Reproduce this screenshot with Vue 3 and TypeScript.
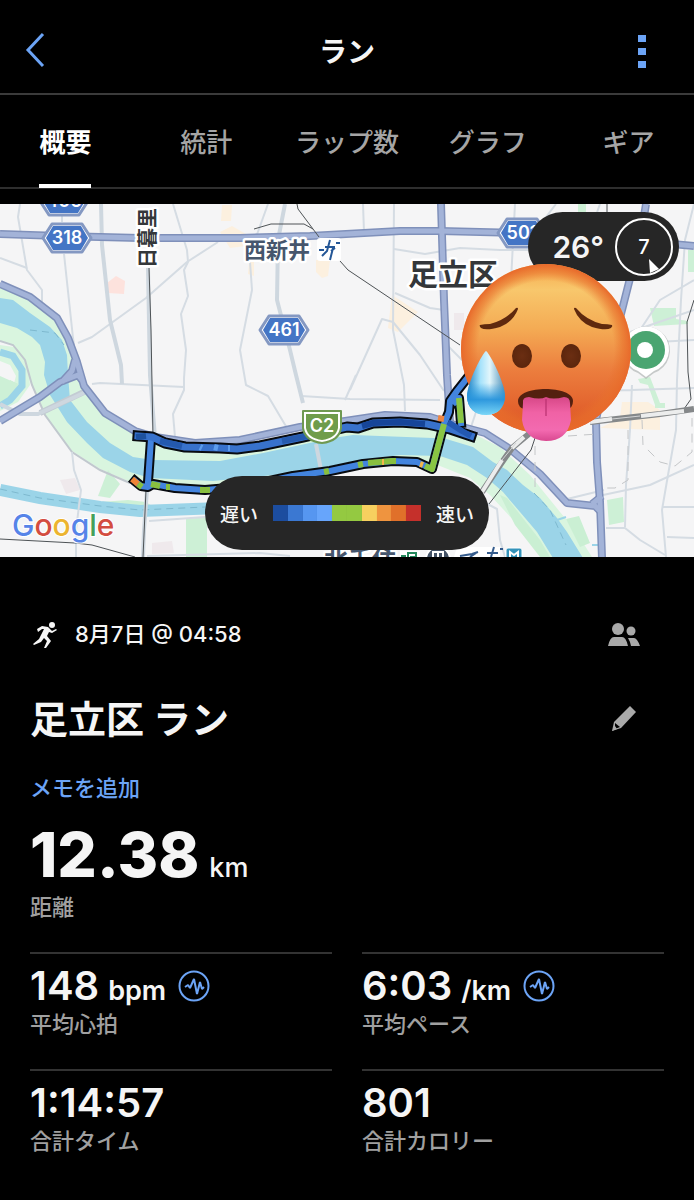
<script setup lang="ts">
import { ref } from 'vue'

interface Stat {
  value: string
  unit?: string
  label: string
  chart?: boolean
}
interface Stroke {
  d: string
  color: string
}

const tabs: string[] = ['概要', '統計', 'ラップ数', 'グラフ', 'ギア']
const active = ref(0)

const stats: Stat[] = [
  { value: '148', unit: 'bpm', label: '平均心拍', chart: true },
  { value: '6:03', unit: '/km', label: '平均ペース', chart: true },
  { value: '1:14:57', label: '合計タイム' },
  { value: '801', label: '合計カロリー' },
]

const minorRoads: string[] = [
  'M20 204L18 217L27 270L42 290L42 302',
  'M0 258L27 268',
  'M62 204L62 222M64 254L73 338L74 345',
  'M173 204L187 250L188 262L184 270L188 296L181 314L186 350L184 378L184 390L173 414L175 437',
  'M78 343L92 337L110 324L146 298L187 262L218 242',
  'M268 204L255 240L250 262L252 290L240 350L246 385L268 396L287 428',
  'M92 384L100 383L184 387M121 375L121 383',
  'M363 204L364 232M394 204L393 330L404 385L405 411',
  'M394 249L425 254L460 248L500 250L528 250',
  'M395 293L430 308L444 310',
  'M301 396L350 399L440 400',
  'M356 375L345 400M350 390L382 319L393 322L420 355L444 391',
  'M515 204L510 300M556 204L540 225M600 204L590 232',
  'M694 204L685 240L681 300L677 380L676 430L668 475L662 510L666 557',
  'M600 391L694 388M600 345L694 340M632 385L630 430L626 485L625 527',
  'M603 495L650 485L694 465M563 500L604 490',
  'M663 507L694 507M667 537L694 538',
  'M606 528L625 528L640 540L665 555',
  'M72 452L74 470L81 490L76 530L76 557',
  'M149 521L205 517M147 556L260 553L290 556',
  'M480 500L497 509L500 540L505 557',
  'M446 344L470 368M630 332L694 310M694 280L660 300L640 330',
  'M470 430L480 400',
]
const wideRoads: string[] = [
  'M101 204L102 245L110 320L121 365L122 384',
  'M148 268L150 375L155 438',
  'M285 204L278 240L277 300L290 350L296 375L303 403M316 444L321 470',
  'M0 404L20 414L38 414L90 390',
  'M147 490L144 530L143 557',
]
const highways: string[] = [
  'M0 234L60 236L140 238L240 238L310 236L400 231L440 231L520 233L600 237L640 241L694 246',
  'M441 204L444 300L447 375L450 422',
  'M646 204L641 235L622 310L605 375L596 420L597 462L600 502L602 558',
  'M0 284L30 297L57 318L68 338L77 362L84 386L105 413L135 431L155 437L195 443L240 440L300 427L345 421L385 415L430 417L455 425L485 433L510 449L540 474L567 503L595 506L600 511',
  'M0 421L40 397L60 382L78 375L82 380M62 382L72 371L75 360',
  'M592 504L602 496',
]
const parks: string[] = [
  'M100 502L128 500L146 502L161 512L145 517L118 514L108 508Z',
  'M108 470L120 484L110 498L98 496Z',
  'M186 519L207 517L207 557L186 557Z',
  'M650 308L676 308L676 319L688 321L688 324L654 326Z',
  'M688 250L694 250L694 272L688 272Z',
  'M607 500L623 497L624 522L609 525Z',
  'M638 379L650 377L660 403L655 405L648 385L640 383Z',
  'M655 403L665 403L665 408L655 408ZM578 204L586 204L586 214L578 214Z',
  'M0 376L18 384L12 398L0 402Z',
]
const shops: string[] = [
  'M222 205L232 205L231 221L221 221Z',
  'M220 232L232 226L246 234L246 246L230 248Z',
  'M316 260L330 260L328 276L322 278L316 272Z',
  'M249 262L254 262L254 276L248 274Z',
  'M392 295L418 312L398 332L388 328Z',
  'M622 402L648 402L660 410L660 430L600 428L620 418Z',
]

const upperRoute = 'M138 436L152 437L165 443L185 447L220 448L237 449L260 446L303 437L347 427L358 428L373 423L400 422L427 424L450 429L471 436'
const lowerRoute = 'M135 481L141 486L148 487L153 484L175 488L205 490L240 487L293 476L330 471L363 464L393 461L417 462L432 469L444 424L449 412L450 401L457 391L472 372M461 423L459 398L455 402M151 439L148 482'

const routeColors: Stroke[] = [
  { d: 'M136 437L146 436', color: '#1d519f' },
  { d: 'M160 441L182 446', color: '#2459ae' },
  { d: 'M200 447L202 448M214 447L218 448M228 448L230 448', color: '#5d9ded' },
  { d: 'M282 441L303 437L340 429', color: '#265bae' },
  { d: 'M362 426L373 423L400 422L425 424', color: '#164599' },
  { d: 'M448 422L462 431L471 436', color: '#2358b1' },
  { d: 'M132 479L138 484', color: '#ee8335' },
  { d: 'M138 484L142 487M151 484L160 486M166 487L170 487M200 490L210 490', color: '#88bf3f' },
  { d: 'M324 472L329 471M358 465L363 464M368 463L392 461L396 461', color: '#88bf3f' },
  { d: 'M382 462L384 462M420 464L423 465', color: '#f4b64b' },
  { d: 'M425 466L432 469L444 424', color: '#8ac543' },
  { d: 'M438 418L444 419', color: '#ef8643' },
  { d: 'M461 423L459 398', color: '#8ac543' },
]

const legend: string[] = [
  '#1c4d9f', '#3b78d2', '#5696f0', '#67a5fb', '#94c941',
  '#94c941', '#f7d05f', '#ef943f', '#e0702a', '#c5302b',
]
</script>

<template>
  <main class="screen">
    <header class="bar">
      <button class="icon-btn back" aria-label="戻る">
        <svg width="22" height="36" viewBox="0 0 22 36">
          <path d="M19 2L4 18L19 34" fill="none" stroke="#6ca4f6" stroke-width="3" />
        </svg>
      </button>
      <h1 class="bar-title">ラン</h1>
      <button class="icon-btn more" aria-label="メニュー">
        <svg width="8" height="34" viewBox="0 0 8 34">
          <path d="M0 0H8V7H0ZM0 13H8V20H0ZM0 26H8V33H0Z" fill="#6ca4f6" />
        </svg>
      </button>
    </header>

    <nav class="tabs" role="tablist">
      <button
        v-for="(t, i) in tabs"
        :key="t"
        role="tab"
        class="tab"
        :class="{ active: i === active }"
        :aria-selected="i === active"
        @click="active = i"
      >
        <span>{{ t }}</span>
      </button>
    </nav>

    <section class="map" aria-label="地図">
      <svg class="map-art" viewBox="0 204 694 353">
        <rect x="0" y="204" width="694" height="353" fill="#f5f5f6" />
        <path v-for="d in shops" :key="d" :d="d" fill="#fcf0df" />
        <path d="M107 283L116 276L125 281L124 294L108 293Z" fill="#fde2dd" />
        <path d="M60 480L75 478L80 490L66 494ZM152 543L172 541L174 553L152 554ZM454 313L464 313L464 330L454 330Z" fill="#efe9ec" />
        <!-- river banks -->
        <path
          d="M0 284L30 297L57 318L70 343L76 368L84 388L105 415L135 433L180 447L240 449L300 436L345 429L400 423L450 432L470 432L500 447L530 475L560 512L575 530L592 557L546 557L515 522L490 495L470 478L440 466L400 462L300 481L220 492L150 489L130 482L100 469L72 451L45 415L30 382L25 360L13 345L0 341Z"
          fill="#d9f5df"
        />
        <path d="M0 345L14 347L27 362L30 385L18 402L0 411Z" fill="#d9f5df" />
        <path d="M0 361L10 365L16 376L12 390L0 397Z" fill="#f5f5f6" />
        <path d="M10 380L18 384L14 394L4 396Z" fill="#caefd3" />
        <path d="M566 519L579 516L590 543L580 547ZM500 495L507 498L540 540L550 557L540 557L515 525Z" fill="#caefd3" />
        <path v-for="d in parks" :key="d" :d="d" fill="#cdf0d6" />
        <!-- water -->
        <path
          d="M0 298L13 300L30 313L50 327L62 340L67 355L68 375L70 400L87 422L110 443L133 457L153 460L220 461L263 453L333 438L353 435L433 438L443 438L473 447L493 462L507 470L523 485L540 498L557 518L567 532L583 558L553 558L537 532L520 512L503 492L487 478L467 465L440 456L400 455L363 460L293 473L213 481L150 478L130 472L103 458L87 443L67 422L50 395L44 375L45 362L40 345L32 337L17 328L0 323Z"
          fill="#9bd4e8"
        />
        <path d="M0 352L13 356L22 370L22 386L10 400L0 406" fill="none" stroke="#9bd4e8" stroke-width="7" />
        <path d="M0 490L40 498L100 507L140 511L220 508" fill="none" stroke="#9bd4e8" stroke-width="12" />
        <path d="M557 520L566 517M548 525L548 548M592 545L602 545" fill="none" stroke="#9bd4e8" stroke-width="2" />
        <path d="M0 489L40 498L100 506L140 510L205 507M30 330L55 333L64 345M534 493L550 510L566 545" fill="none" stroke="#7eb9cf" stroke-width="1" stroke-dasharray="7 5" />

        <path d="M0 341L13 345L25 360L32 385L45 415L72 452L100 470L130 483" fill="none" stroke="#c1c8ce" stroke-width="2" />
        <path d="M40 413L88 390" fill="none" stroke="#c3cbd3" stroke-width="6" />
        <path v-for="d in minorRoads" :key="d" :d="d" fill="none" stroke="#d5dce3" stroke-width="2" stroke-linejoin="round" />
        <path v-for="d in wideRoads" :key="d" :d="d" fill="none" stroke="#ced7df" stroke-width="4" stroke-linejoin="round" />
        <path v-for="d in highways" :key="d" :d="d" fill="none" stroke="#7f90ba" stroke-width="8" stroke-linejoin="round" />
        <path v-for="d in highways" :key="d" :d="d" fill="none" stroke="#a3b3d8" stroke-width="5" stroke-linejoin="round" />

        <!-- railways -->
        <path
          d="M149 268L151 330L153 437M146 490L143 557M297 204L298 209L319 237M254 229L271 224L304 224L313 229M340 261L348 270L460 345M0 539L75 543L92 545L135 557M535 438L531 450L489 504M607 204V212M694 300L687 322L688 372L691 399L684 409"
          fill="none" stroke="#4e5356" stroke-width="1"
        />
        <path d="M530 433L512 448L498 468L482 492M590 422L660 414L694 409" fill="none" stroke="#85888a" stroke-width="6" />
        <path d="M502 460L482 492M524 437L512 448M641 416L684 411M590 422L612 419" fill="none" stroke="#eceded" stroke-width="4" />
        <path d="M516 443L502 460M612 419L640 416" fill="none" stroke="#d2d3d4" stroke-width="1" />
        <path d="M568 436L598 434M535 446V488M642 420L643 445L660 462L675 466L692 452L692 418M628 430L628 480L615 488L606 488" fill="none" stroke="#c4c6c8" stroke-width="1" stroke-dasharray="9 7" />

        <!-- recorded track -->
        <g fill="none" stroke-linejoin="round">
          <path :d="lowerRoute" stroke="#080b10" stroke-width="10" stroke-linecap="square" />
          <path :d="upperRoute" stroke="#080b10" stroke-width="11" stroke-linecap="square" />
          <path :d="lowerRoute" stroke="#4384de" stroke-width="6" stroke-linecap="square" />
          <path :d="upperRoute" stroke="#3872cc" stroke-width="7" stroke-linecap="square" />
          <path v-for="s in routeColors" :key="s.d" :d="s.d" :stroke="s.color" stroke-width="6" />
        </g>

        <!-- road shields -->
        <g class="shield" stroke-linejoin="round">
          <g v-for="s in [['406', 64, 201], ['318', 67, 238], ['461', 284, 330], ['501', 522, 233]]" :key="s[0]" :transform="`translate(${s[1]} ${s[2]})`">
            <path d="M-15 -14H15L24 0L15 14H-15L-24 0Z" fill="#fff" stroke="#8498c2" stroke-width="3" />
            <path d="M-14 -12H14L21 0L14 12H-14L-21 0Z" fill="#4475c5" />
            <text y="6">{{ s[0] }}</text>
          </g>
          <path d="M303 411H341V428Q339 441 322 443Q305 441 303 428Z" fill="#fff" stroke="#6f9951" stroke-width="2" />
          <path d="M306 414H338V428Q336 438 322 440Q308 438 306 428Z" fill="#6f9c4b" />
          <text x="322" y="432">C2</text>
        </g>

        <!-- place names -->
        <text class="place dark line" transform="translate(155 268) rotate(-90)">日暮里</text>
        <text class="place dark city" x="408" y="285">足立区</text>
        <text class="place station" x="244" y="258">西新井</text>
        <rect x="317" y="238" width="24" height="23" rx="3" fill="#fff" />
        <path d="M319 250H324M325 247H335M330 240L327 251L322 256M336 243H340M333 248L330 260M335 248L331 251" fill="none" stroke="#255797" stroke-width="2" />
        <text class="place station big" x="324" y="568">北千住</text>
        <rect x="400" y="551" width="20" height="10" fill="#fff" />
        <path d="M401 556H406M408 560V553H416V557H410" fill="none" stroke="#23875b" stroke-width="2" />
        <circle cx="438" cy="559" r="12" fill="#435266" stroke="#fff" stroke-width="2" />
        <path d="M433 552H443V558H433ZM438 552V558" fill="none" stroke="#fff" stroke-width="2" />
        <path d="M457 547H500V557H454Z" fill="#fff" />
        <path d="M460 556L472 554L478 552M470 557L476 553M487 553H498M494 547L491 557M500 549H503" fill="none" stroke="#345b8c" stroke-width="2" />
        <rect x="506" y="548" width="16" height="14" rx="2" fill="#3493ba" stroke="#fff" stroke-width="1" />
        <path d="M510 557V552L514 555L518 552V557" fill="none" stroke="#fff" stroke-width="2" />

        <text class="google" x="12" y="536">
          <tspan fill="#5684e8">G</tspan><tspan fill="#d34d40">o</tspan><tspan fill="#ecb42f">o</tspan><tspan fill="#5684e8">g</tspan><tspan fill="#44a05a">l</tspan><tspan fill="#d34d40">e</tspan>
        </text>

        <!-- finish pin -->
        <path d="M646 379L638 373A24 24 0 1 1 654 373Z" fill="#8e9492" opacity="0.45" />
        <path d="M646 377L638 371A23 23 0 1 1 654 371Z" fill="#fff" />
        <circle cx="646" cy="350" r="19" fill="#4aa571" />
        <circle cx="645" cy="350" r="8" fill="#fff" />
      </svg>

      <div class="weather">
        <span class="temp">26°</span>
        <svg width="58" height="58" viewBox="0 0 58 58">
          <circle cx="29" cy="29" r="28" fill="none" stroke="#fff" stroke-width="2" />
          <path d="M34 41L35 55L44 51Z" fill="#fff" />
          <text class="wind" x="29" y="36">7</text>
        </svg>
      </div>

      <svg class="face" viewBox="0 204 694 353" aria-label="暑い顔">
        <defs>
          <linearGradient id="skin" x1="0" y1="0" x2="0" y2="1">
            <stop offset="0" stop-color="#f6a94c" />
            <stop offset="0.15" stop-color="#f8c76c" />
            <stop offset="0.38" stop-color="#f4ab54" />
            <stop offset="0.62" stop-color="#ec7e3e" />
            <stop offset="1" stop-color="#dc5022" />
          </linearGradient>
          <radialGradient id="rim">
            <stop offset="0.8" stop-color="#e8702c" stop-opacity="0" />
            <stop offset="0.9" stop-color="#e8702c" stop-opacity="0.6" />
            <stop offset="1" stop-color="#e8692b" />
          </radialGradient>
          <linearGradient id="drop">
            <stop offset="0" stop-color="#1d80c4" />
            <stop offset="0.35" stop-color="#a5e2fb" />
            <stop offset="0.6" stop-color="#e2f6fb" />
            <stop offset="1" stop-color="#4d8fb8" />
          </linearGradient>
          <linearGradient id="dropShade" x1="0" y1="0" x2="0" y2="1">
            <stop offset="0.5" stop-color="#239be2" stop-opacity="0" />
            <stop offset="0.76" stop-color="#2794dc" stop-opacity="0.95" />
            <stop offset="1" stop-color="#7ad6f7" />
          </linearGradient>
          <radialGradient id="eye">
            <stop offset="0" stop-color="#6b2e12" />
            <stop offset="1" stop-color="#5c260d" />
          </radialGradient>
          <linearGradient id="tongue" x1="0" y1="0" x2="0" y2="1">
            <stop offset="0" stop-color="#d74787" />
            <stop offset="0.35" stop-color="#f062a5" />
            <stop offset="0.75" stop-color="#f36ab0" />
            <stop offset="1" stop-color="#d94890" />
          </linearGradient>
        </defs>
        <circle cx="546" cy="349" r="85" fill="url(#skin)" />
        <circle cx="546" cy="349" r="85" fill="url(#rim)" />
        <ellipse cx="522" cy="356" rx="10" ry="12" fill="url(#eye)" />
        <ellipse cx="571" cy="356" rx="10" ry="12" fill="url(#eye)" />
        <path d="M480 325Q484 324 490 324Q506 320 516 308Q518 307 518 309Q513 322 500 327Q486 331 481 328Q479 326 480 325Z" fill="#5f290e" />
        <path d="M612 325Q608 324 602 324Q586 320 576 308Q574 307 574 309Q579 322 592 327Q606 331 611 328Q613 326 612 325Z" fill="#5f290e" />
        <path d="M518 401C518 385 573 385 573 401Q573 408 567 409H525Q518 408 518 401Z" fill="#54200f" />
        <path d="M523 403Q522 397 529 397Q540 400 546 397Q553 400 564 397Q570 397 570 403L571 420Q567 441 546 441Q525 440 522 420Z" fill="url(#tongue)" />
        <path d="M546 399V416" stroke="#ba3070" stroke-width="2" opacity="0.6" />
        <path d="M486 351C483 352 467 383 467 396C467 408 475 415 486 415C498 415 505 407 505 396C505 383 489 352 486 351Z" fill="url(#drop)" />
        <path d="M486 351C483 352 467 383 467 396C467 408 475 415 486 415C498 415 505 407 505 396C505 383 489 352 486 351Z" fill="url(#dropShade)" />
      </svg>

      <div class="legend">
        <span>遅い</span>
        <div class="scale">
          <i v-for="(c, i) in legend" :key="i" :style="{ background: c }"></i>
        </div>
        <span>速い</span>
      </div>
    </section>

    <section class="details">
      <div class="row meta">
        <svg class="runner" width="30" height="30" viewBox="0 0 30 30" fill="#f5f5f5">
          <circle cx="22" cy="5" r="3" />
          <path d="M18 7L12 6L7 9L8 12L12 9L14 9L11 15L9 19L3 24L4 25L11 22L14 18L17 21L14 28L16 28L21 21L17 16L19 12L22 13L27 10L26 9L22 11L20 9Z" />
        </svg>
        <time>8月7日 @ 04:58</time>
        <button class="icon-btn side" aria-label="公開範囲">
          <svg width="32" height="24" viewBox="0 0 32 24" fill="#a9a9a9">
            <circle cx="10" cy="6" r="6" />
            <circle cx="23" cy="8" r="4.5" />
            <path d="M0 23Q2 14 6 14H14Q18 14 20 23ZM20 15H26Q29 15 32 23H23Q22 18 20 15Z" />
          </svg>
        </button>
      </div>
      <div class="row title">
        <h2>足立区 ラン</h2>
        <button class="icon-btn side" aria-label="編集">
          <svg width="26" height="26" viewBox="0 0 26 26">
            <path d="M19 0L25 6L10 22L1 25L3 16Z" fill="#a9a9a9" />
            <path d="M4 17L9 21L4 23Z" fill="#000" />
            <path d="M1 25L4 20L6 23Z" fill="#a9a9a9" />
          </svg>
        </button>
      </div>
      <a class="memo" href="#memo">メモを追加</a>

      <div class="distance"><b>12.38</b><span>km</span></div>
      <p class="label">距離</p>

      <div class="stats">
        <div v-for="s in stats" :key="s.label" class="stat">
          <div class="value">
            <b>{{ s.value }}</b>
            <span v-if="s.unit">{{ s.unit }}</span>
            <button v-if="s.chart" class="icon-btn" aria-label="グラフを表示">
              <svg width="32" height="32" viewBox="0 0 32 32" fill="none" stroke="#6ca4f6" stroke-width="2">
                <circle cx="16" cy="16" r="14.5" />
                <path d="M7 17L10 15L12 18L16 9L19 24L22 12L24 19L26 17" stroke-linejoin="bevel" />
              </svg>
            </button>
          </div>
          <p class="label">{{ s.label }}</p>
        </div>
      </div>
    </section>
  </main>
</template>

<style>
body {
  margin: 0;
  background: #000;
}
</style>

<style scoped>
.screen {
  min-height: 100vh;
  overflow: hidden;
  background: #000;
  color: #f5f5f5;
  font-family: Inter, 'Noto Sans CJK JP', sans-serif;
}
button {
  padding: 0;
  border: 0;
  background: none;
  color: inherit;
  font: inherit;
  cursor: pointer;
}
h1,
h2,
p {
  margin: 0;
}
svg {
  display: block;
}
.icon-btn {
  display: flex;
  align-items: center;
  justify-content: center;
}
.bar {
  display: grid;
  grid-template-columns: 70px 1fr 70px;
  align-items: center;
  height: 93px;
  padding: 10px 0 0;
  box-sizing: border-box;
}
.back {
  height: 44px;
  padding-bottom: 4px;
}
.more {
  height: 44px;
  padding-right: 34px;
}
.bar-title {
  text-align: center;
  font-size: 28px;
  line-height: 40px;
  font-weight: 700;
}
.tabs {
  display: grid;
  grid-template-columns: repeat(5, 1fr);
  height: 92px;
  margin: 0 -5px;
  border-top: 2px solid #3b3b3b;
  border-bottom: 2px solid #2e2e2e;
}
.tab {
  display: flex;
  justify-content: center;
  color: #a5a5a5;
  font-size: 26px;
  font-weight: 500;
  white-space: nowrap;
}
.tab span {
  box-sizing: border-box;
  height: 93px;
  border-bottom: 4px solid transparent;
  line-height: 95px;
}
.tab.active {
  color: #fff;
  font-weight: 700;
}
.tab.active span {
  border-color: #fff;
}
.map {
  position: relative;
  margin-top: 15px;
}
.map-art {
  width: 100%;
}
.face {
  position: absolute;
  inset: 0;
  width: 100%;
  pointer-events: none;
}
.shield text {
  fill: #fff;
  font-size: 18px;
  font-weight: 600;
  text-anchor: middle;
}
.place {
  stroke: #fff;
  stroke-width: 5px;
  stroke-linejoin: round;
  paint-order: stroke;
  font-weight: 700;
}
.dark {
  fill: #34373a;
}
.line {
  font-size: 20px;
}
.city {
  font-size: 30px;
}
.station {
  fill: #46566d;
  font-size: 22px;
}
.big {
  font-size: 24px;
}
.google {
  font-size: 30px;
  font-weight: 500;
  stroke: #fff;
  stroke-width: 2px;
  paint-order: stroke;
}
.weather {
  position: absolute;
  top: 8px;
  right: 15px;
  display: flex;
  align-items: center;
  gap: 11px;
  height: 69px;
  padding: 0 6px 0 24px;
  border-radius: 35px;
  background: #262626;
}
.temp {
  font-size: 30px;
  font-weight: 600;
}
.wind {
  fill: #fff;
  font-size: 20px;
  font-weight: 500;
  text-anchor: middle;
}
.legend {
  position: absolute;
  bottom: 7px;
  left: 50%;
  display: flex;
  align-items: center;
  gap: 15px;
  height: 74px;
  padding: 0 15px;
  border-radius: 37px;
  background: #262626;
  font-size: 19px;
  font-weight: 500;
  white-space: nowrap;
  transform: translateX(-50%);
}
.scale {
  display: flex;
  width: 148px;
  height: 16px;
}
.scale i {
  flex: 1;
}
.details {
  padding: 60px 30px 45px;
}
.row {
  display: flex;
  align-items: center;
}
.side {
  width: 48px;
  height: 36px;
  margin-right: 16px;
  margin-left: auto;
}
.meta {
  height: 36px;
  font-size: 22px;
  font-weight: 500;
}
.meta time {
  line-height: 32px;
  padding-bottom: 2px;
}
.runner {
  margin-right: 15px;
}
.title {
  height: 56px;
  margin-top: 38px;
}
.title h2 {
  font-size: 38px;
  line-height: 56px;
  font-weight: 700;
}
.memo {
  display: block;
  width: fit-content;
  margin-top: 25px;
  color: #6ca4f6;
  font-size: 22px;
  line-height: 32px;
  font-weight: 500;
  text-decoration: none;
}
.distance {
  display: flex;
  align-items: baseline;
  gap: 10px;
  height: 61px;
  margin-top: 20px;
  line-height: 61px;
}
.distance b {
  font-size: 62px;
  font-weight: 800;
}
.distance span {
  font-size: 27px;
  font-weight: 500;
}
.label {
  color: #a0a0a0;
  font-size: 22px;
  line-height: 28px;
  font-weight: 500;
}
.distance + .label {
  margin-top: 8px;
}
.stats {
  display: grid;
  grid-template-columns: 1fr 1fr;
  gap: 31px 30px;
  margin-top: 31px;
}
.stat {
  padding-top: 8px;
  border-top: 2px solid #333;
}
.value {
  display: flex;
  align-items: baseline;
  height: 48px;
  line-height: 48px;
}
.value b {
  font-size: 40px;
  font-weight: 600;
}
.value span {
  margin-left: 9px;
  font-size: 27px;
  font-weight: 600;
}
.value button {
  align-self: center;
  margin-left: 12px;
}
</style>
